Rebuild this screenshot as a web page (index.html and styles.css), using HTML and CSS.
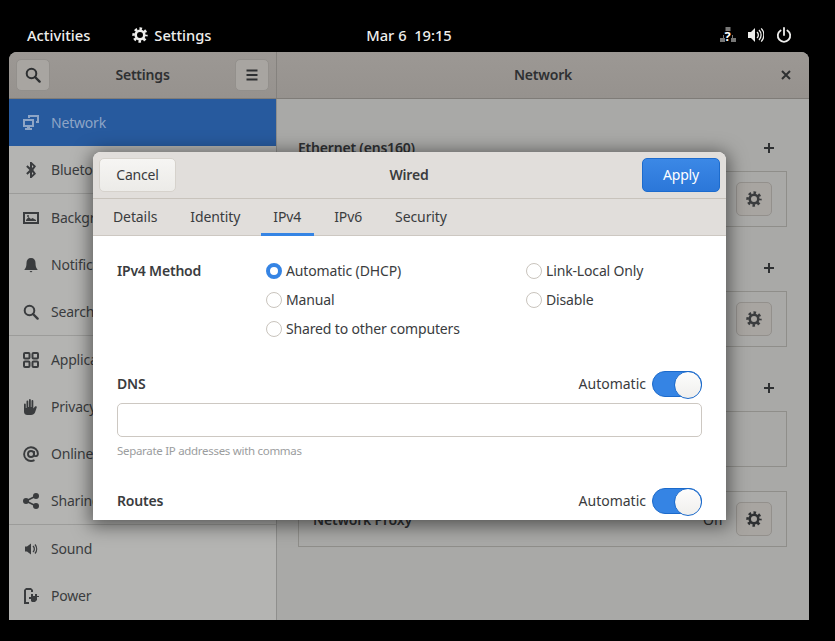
FILE: index.html
```html
<!DOCTYPE html>
<html lang="en">
<head>
    <meta charset="UTF-8">
    <title>Network - Settings</title>
    <link rel="stylesheet" href="styles.css">
</head>
<body>
    <svg class="defs" width="0" height="0">
        <symbol id="gear" viewBox="0 0 16 16">
            <circle cx="8" cy="8" r="4.3" fill="none" stroke="currentColor" stroke-width="2.6"/>
            <circle cx="8" cy="8" r="6.4" fill="none" stroke="currentColor" stroke-width="2.6" stroke-dasharray="2.6 2.43" stroke-dashoffset="1.3"/>
        </symbol>
        <symbol id="search" viewBox="0 0 16 16">
            <circle cx="6.5" cy="6.5" r="4.8" fill="none" stroke="currentColor" stroke-width="2"/>
            <path d="M10 10l4.6 4.6" stroke="currentColor" stroke-width="2.4" stroke-linecap="round"/>
        </symbol>
        <symbol id="plus" viewBox="0 0 12 12">
            <path d="M1 6h10M6 1v10" stroke="currentColor" stroke-width="2"/>
        </symbol>
    </svg>

    <header class="topbar">
        <div class="topbar-left">
            <span>Activities</span>
            <span class="app-menu">
                <svg class="icon-16"><use href="#gear"/></svg>
                Settings
            </span>
        </div>
        <div class="clock">Mar 6&nbsp;&nbsp;19:15</div>
        <div class="tray">
            <span class="net-status">
                <svg class="icon-16" viewBox="0 0 16 16" fill="currentColor" opacity=".5">
                    <path d="M5.500 0h5v4h-5zM0 11h5v4H0zM11 11h5v4h-5z"/>
                    <path d="M3 8h1v3H3zM12 8h1v3h-1z"/>
                </svg>
                <span class="net-mark">?</span>
            </span>
            <svg class="icon-16" viewBox="0 0 16 16" fill="currentColor">
                <path d="M0 5h3l4-4v14l-4-4H0z"/>
                <path d="M9 5a4 4 0 010 6M11 3a7 7 0 010 10M13.200 1.400a9.500 9.500 0 010 13.200" fill="none" stroke="currentColor" stroke-width="1.300"/>
            </svg>
            <svg class="icon-16" viewBox="0 0 16 16" fill="none" stroke="currentColor" stroke-width="1.800">
                <path d="M8 1v7" stroke-linecap="round"/>
                <path d="M4.600 3.400a6.200 6.200 0 106.800 0" stroke-linecap="round"/>
            </svg>
        </div>
    </header>

    <div class="window">
        <div class="titlebar">
            <div class="titlebar-side">
                <button class="flat-btn"><svg class="icon-16"><use href="#search"/></svg></button>
                <span class="title">Settings</span>
                <button class="flat-btn">
                    <svg class="icon-16" viewBox="0 0 16 16" fill="currentColor"><path d="M2.500 2.500h11v2h-11zM2.500 7h11v2h-11zM2.500 11.500h11v2h-11z"/></svg>
                </button>
            </div>
            <div class="titlebar-main">
                <span class="title">Network</span>
                <svg class="close-icon" viewBox="0 0 10 10"><path d="M1 1l8 8M9 1l-8 8" stroke="currentColor" stroke-width="2"/></svg>
            </div>
        </div>

        <div class="window-body">
            <nav class="sidebar">
                <div class="side-row active">
                    <svg class="icon-16" viewBox="0 0 16 16" fill="currentColor">
                        <path d="M5 0h11v8h-3V6h1V2H7v1H5zM0 4h11v8H7v1h2v2H2v-2h2v-1H0zm2 2v4h7V6z" fill-rule="evenodd"/>
                    </svg>
                    Network
                </div>
                <div class="side-row sep">
                    <svg class="icon-16" viewBox="0 0 16 16" fill="currentColor">
                        <path d="M7 0h1.500L13 4.200 10.300 8 13 11.800 8.500 16H7v-5.500L4.500 12.700 3.200 11.300 6.500 8 3.200 4.700 4.500 3.300 7 5.500zM9 3v3l1.500-1.500zM9 10v3l1.500-1.500z" fill-rule="evenodd"/>
                    </svg>
                    Bluetooth
                </div>
                <div class="side-row">
                    <svg class="icon-16" viewBox="0 0 16 16" fill="currentColor">
                        <path d="M0 2h16v12H0zm2 2v8h12V4z" fill-rule="evenodd"/>
                        <path d="M3 10l2.500-3 2.500 2 1.500-1 3.500 2v1H3z"/>
                        <circle cx="5" cy="6" r="1"/>
                    </svg>
                    Background
                </div>
                <div class="side-row">
                    <svg class="icon-16" viewBox="0 0 16 16" fill="currentColor">
                        <path d="M8 1c3 0 4.500 2 4.500 5 0 3 .5 5 2 6.500V13h-13v-.5c1.500-1.500 2-3.500 2-6.500 0-3 1.500-5 4.500-5zM6.500 14h3L8 15.500z"/>
                    </svg>
                    Notifications
                </div>
                <div class="side-row sep">
                    <svg class="icon-16"><use href="#search"/></svg>
                    Search
                </div>
                <div class="side-row">
                    <svg class="icon-16" viewBox="0 0 16 16" fill="none" stroke="currentColor" stroke-width="2">
                        <rect x="1" y="1" width="5.500" height="5.500" rx="1"/>
                        <rect x="9.500" y="1" width="5.500" height="5.500" rx="1"/>
                        <rect x="1" y="9.500" width="5.500" height="5.500" rx="1"/>
                        <rect x="9.500" y="9.500" width="5.500" height="5.500" rx="1"/>
                    </svg>
                    Applications
                </div>
                <div class="side-row">
                    <svg class="icon-16" viewBox="0 0 16 16" fill="currentColor">
                        <path d="M1 5.500a.9.900 0 011.800 0V9h.7V2.500a.9.900 0 011.800 0V8H6V1a.9.900 0 011.800 0v7h.7V2a.9.900 0 011.800 0v7.500l1.700-2c.8-.8 2.300 0 1.700 1L12 13.500c-.7 1.500-2 2.500-4 2.500H4.500C2 16 1 14.500 1 12.500z"/>
                    </svg>
                    Privacy
                </div>
                <div class="side-row">
                    <svg class="icon-16" viewBox="0 0 16 16" fill="none" stroke="currentColor" stroke-width="1.900">
                        <circle cx="8" cy="8" r="3"/>
                        <path d="M11 5v4c0 1.600 3.900 1.800 3.900-1.200A6.900 6.900 0 108 15c1.300 0 2.500-.3 3.500-.8"/>
                    </svg>
                    Online Accounts
                </div>
                <div class="side-row sep">
                    <svg class="icon-16" viewBox="0 0 16 16" fill="currentColor">
                        <circle cx="3" cy="8" r="3"/>
                        <circle cx="13" cy="3" r="3"/>
                        <circle cx="13" cy="13" r="3"/>
                        <path d="M3 8l10-5M3 8l10 5" stroke="currentColor" stroke-width="1.600"/>
                    </svg>
                    Sharing
                </div>
                <div class="side-row">
                    <svg class="icon-16" viewBox="0 0 16 16" fill="currentColor">
                        <path d="M2 5.500h2L8 2.500v11l-4-3H2z"/>
                        <path d="M10 5a4 4 0 010 6M12 3.500a7 7 0 010 9" fill="none" stroke="currentColor" stroke-width="1.300"/>
                    </svg>
                    Sound
                </div>
                <div class="side-row">
                    <svg class="icon-16" viewBox="0 0 16 16" fill="currentColor">
                        <path d="M3 0h5l2 2v2H8V2H3v12h3v2H1V2z"/>
                        <path d="M8 6h2v2h2V6h2v2h2v1h-2v3l-2 2H9l-1-1v-2H6V9h2z"/>
                    </svg>
                    Power
                </div>
            </nav>

            <main class="panel">
                <section class="group">
                    <div class="group-head">
                        <h3>Ethernet (ens160)</h3>
                        <svg class="plus"><use href="#plus"/></svg>
                    </div>
                    <div class="group-box">
                        <button class="flat-btn gear-btn"><svg class="icon-16"><use href="#gear"/></svg></button>
                    </div>
                </section>
                <section class="group">
                    <div class="group-head end">
                        <svg class="plus"><use href="#plus"/></svg>
                    </div>
                    <div class="group-box">
                        <button class="flat-btn gear-btn"><svg class="icon-16"><use href="#gear"/></svg></button>
                    </div>
                </section>
                <section class="group">
                    <div class="group-head end">
                        <svg class="plus"><use href="#plus"/></svg>
                    </div>
                    <div class="group-box"></div>
                </section>
                <div class="group-box proxy-box">
                    <strong>Network Proxy</strong>
                    <span class="proxy-state">Off</span>
                    <button class="flat-btn gear-btn"><svg class="icon-16"><use href="#gear"/></svg></button>
                </div>
            </main>
        </div>
    </div>

    <div class="dialog">
        <div class="dialog-head">
            <button class="btn-cancel">Cancel</button>
            <span class="dialog-title">Wired</span>
            <button class="btn-apply">Apply</button>
        </div>
        <div class="tabs">
            <span class="tab">Details</span>
            <span class="tab">Identity</span>
            <span class="tab current">IPv4</span>
            <span class="tab">IPv6</span>
            <span class="tab">Security</span>
        </div>
        <div class="dialog-body">
            <div class="method">
                <span class="label-bold">IPv4 Method</span>
                <label class="radio on"><i></i>Automatic (DHCP)</label>
                <label class="radio"><i></i>Link-Local Only</label>
                <label class="radio col2"><i></i>Manual</label>
                <label class="radio"><i></i>Disable</label>
                <label class="radio col2"><i></i>Shared to other computers</label>
            </div>
            <div class="switch-row dns">
                <span class="label-bold">DNS</span>
                <span class="auto">Automatic</span>
                <span class="switch"></span>
            </div>
            <div class="entry"></div>
            <div class="hint">Separate IP addresses with commas</div>
            <div class="switch-row routes">
                <span class="label-bold">Routes</span>
                <span class="auto">Automatic</span>
                <span class="switch"></span>
            </div>
        </div>
    </div>
</body>
</html>
```

FILE: styles.css
```css
* {
    box-sizing: border-box;
}
html, body {
    height: 100%;
}
body {
    margin: 0;
    background-color: #000;
    font-family: "Noto Sans", sans-serif;
    font-size: 14px;
    letter-spacing: -0.2px;
    color: #3a3c3e;
    overflow: hidden;
    position: relative;
}
h3 {
    margin: 0;
    padding-bottom: 2px;
    font-size: 14px;
    font-weight: 600;
}
button {
    font: inherit;
    color: inherit;
    letter-spacing: inherit;
}
.defs {
    position: absolute;
}
.icon-16 {
    width: 16px;
    height: 16px;
    flex: none;
}

/* top bar */
.topbar {
    height: 52px;
    padding: 17px 43px 0 27px;
    display: grid;
    grid-template-columns: 1fr auto 1fr;
    align-items: center;
    color: #eeeeec;
    font-size: 14.700px;
    font-weight: 500;
    letter-spacing: 0;
}
.topbar-left {
    display: flex;
    align-items: center;
    gap: 42px;
}
.app-menu {
    display: flex;
    align-items: center;
    gap: 6px;
}
.clock {
    margin-left: -1px;
}
.tray {
    display: flex;
    justify-content: flex-end;
    gap: 12px;
}
.net-status {
    width: 16px;
    height: 16px;
    position: relative;
    display: block;
}
.net-status .icon-16 {
    display: block;
}
.net-mark {
    position: absolute;
    left: 4.500px;
    top: 3px;
    font-size: 13px;
    line-height: 13px;
    font-weight: 700;
    color: #fff;
}

/* main window */
.window {
    position: absolute;
    left: 9px;
    top: 52px;
    width: 800px;
    height: 568px;
    border-radius: 8px 8px 0 0;
    overflow: hidden;
    background-color: #a9a9a7;
}
.titlebar {
    display: flex;
    height: 47px;
    border-bottom: 1px solid #7f7c78;
    background: linear-gradient(#9c9894, #96928e);
    color: #2e3032;
}
.titlebar-side {
    width: 268px;
    padding: 0 7px;
    display: flex;
    align-items: center;
    justify-content: space-between;
    border-right: 1px solid #85827e;
}
.titlebar-main {
    flex: 1;
    position: relative;
    display: flex;
    align-items: center;
    justify-content: center;
}
.title {
    padding-bottom: 2px;
    font-weight: 600;
}
.close-icon {
    position: absolute;
    right: 18px;
    top: 18px;
    width: 10px;
    height: 10px;
}
.flat-btn {
    width: 34px;
    height: 32px;
    padding: 0;
    display: flex;
    align-items: center;
    justify-content: center;
    border: 1px solid #93908c;
    border-radius: 5px;
    background-color: #a8a5a1;
}
.window-body {
    display: flex;
    height: 521px;
}

/* sidebar */
.sidebar {
    width: 268px;
    flex: none;
    background-color: #b4b4b2;
    border-right: 1px solid #8f8f8d;
}
.side-row {
    height: 47px;
    padding-left: 14px;
    display: flex;
    align-items: center;
    gap: 12px;
    white-space: nowrap;
}
.side-row.sep {
    height: 48px;
    border-bottom: 1px solid #9c9c9a;
}
.side-row.active {
    background-color: #275a9e;
    color: #8ea5c6;
}

/* network panel */
.panel {
    flex: 1;
    padding: 37px 22px 0 21px;
    background-color: #a9a9a7;
}
.group {
    margin-bottom: 29px;
}
.group:nth-child(3) {
    margin-bottom: 24px;
}
.group-head {
    height: 24px;
    margin-bottom: 11px;
    padding-right: 12px;
    display: flex;
    align-items: center;
    justify-content: space-between;
    color: #2e3032;
}
.group-head.end {
    justify-content: flex-end;
}
.plus {
    width: 12px;
    height: 12px;
}
.group-box {
    height: 56px;
    padding-right: 14px;
    display: flex;
    align-items: center;
    justify-content: flex-end;
    border: 1px solid #8f8e8a;
}
.gear-btn {
    width: 36px;
    height: 34px;
}
.proxy-box {
    padding-left: 14px;
    color: #2e3032;
}
.proxy-box strong {
    margin-right: auto;
    font-weight: 600;
}
.proxy-state {
    margin-right: 13px;
}

/* wired dialog */
.dialog {
    position: absolute;
    left: 93px;
    top: 152px;
    width: 633px;
    height: 368px;
    border-radius: 8px 8px 0 0;
    overflow: hidden;
    background-color: #fff;
    box-shadow: 0 3px 18px 3px rgba(0, 0, 0, 0.5);
}
.dialog-head {
    height: 47px;
    padding: 6px 6px 0 6px;
    display: grid;
    grid-template-columns: 1fr auto 1fr;
    align-items: start;
    background-color: #e1dedb;
    border-bottom: 1px solid #c8c3bc;
}
.dialog-title {
    margin-top: 7px;
    margin-left: -1px;
    font-weight: 600;
}
.btn-cancel, .btn-apply {
    width: 78px;
    height: 34px;
    padding: 0 0 2px;
    border-radius: 5px;
}
.btn-cancel {
    width: 77px;
    background: linear-gradient(#f6f5f3, #ecebe8);
    border: 1px solid #d6d2cc;
}
.btn-apply {
    justify-self: end;
    color: #fff;
    background: linear-gradient(#3b88e6, #2b77d9);
    border: 1px solid #1c6bcd;
}
.tabs {
    height: 37px;
    padding-left: 7px;
    display: flex;
    gap: 8px;
    background-color: #e1dedb;
    border-bottom: 1px solid #cdc8c2;
    letter-spacing: -0.1px;
}
.tab {
    height: 37px;
    padding: 0 12.500px 2px;
    display: flex;
    align-items: center;
}
.tabs .tab:first-child {
    padding-left: 13px;
}
.tab.current {
    border-bottom: 3px solid #3584e4;
    padding-top: 1px;
    padding-bottom: 0;
}
.dialog-body {
    padding: 20px 24px 0;
}
.method {
    display: grid;
    grid-template-columns: 149px 260px 1fr;
    grid-auto-rows: 29px;
    align-items: center;
}
.label-bold {
    font-weight: 600;
}
.radio {
    display: flex;
    align-items: center;
    gap: 4px;
    letter-spacing: -0.15px;
}
.radio.col2 {
    grid-column: 2;
}
.radio i {
    width: 16px;
    height: 16px;
    margin-top: 1px;
    border: 1px solid #c9c4bd;
    border-radius: 50%;
    background-color: #fff;
}
.radio.on i {
    border: 4.500px solid #3584e4;
}
.switch-row {
    height: 26px;
    display: flex;
    align-items: center;
}
.switch-row .label-bold {
    margin-right: auto;
    padding-bottom: 2px;
}
.dns {
    margin-top: 28px;
}
.routes {
    margin-top: 29px;
}
.auto {
    margin-right: 6px;
    padding-bottom: 2px;
    letter-spacing: 0;
}
.switch {
    width: 50px;
    height: 26px;
    position: relative;
    border: 1px solid #1b6acb;
    border-radius: 13px;
    background-color: #3584e4;
}
.switch::after {
    content: "";
    position: absolute;
    right: -1px;
    top: -1px;
    width: 26px;
    height: 26px;
    border-radius: 50%;
    border: 1px solid #1b6acb;
    background: linear-gradient(#fdfdfc, #f0efed);
}
.entry {
    height: 34px;
    margin-top: 6px;
    border: 1px solid #cdc8c2;
    border-radius: 5px;
}
.hint {
    height: 16px;
    margin-top: 6px;
    font-size: 11.500px;
    line-height: 16px;
    letter-spacing: -0.3px;
    color: #9b9d9e;
}
```
